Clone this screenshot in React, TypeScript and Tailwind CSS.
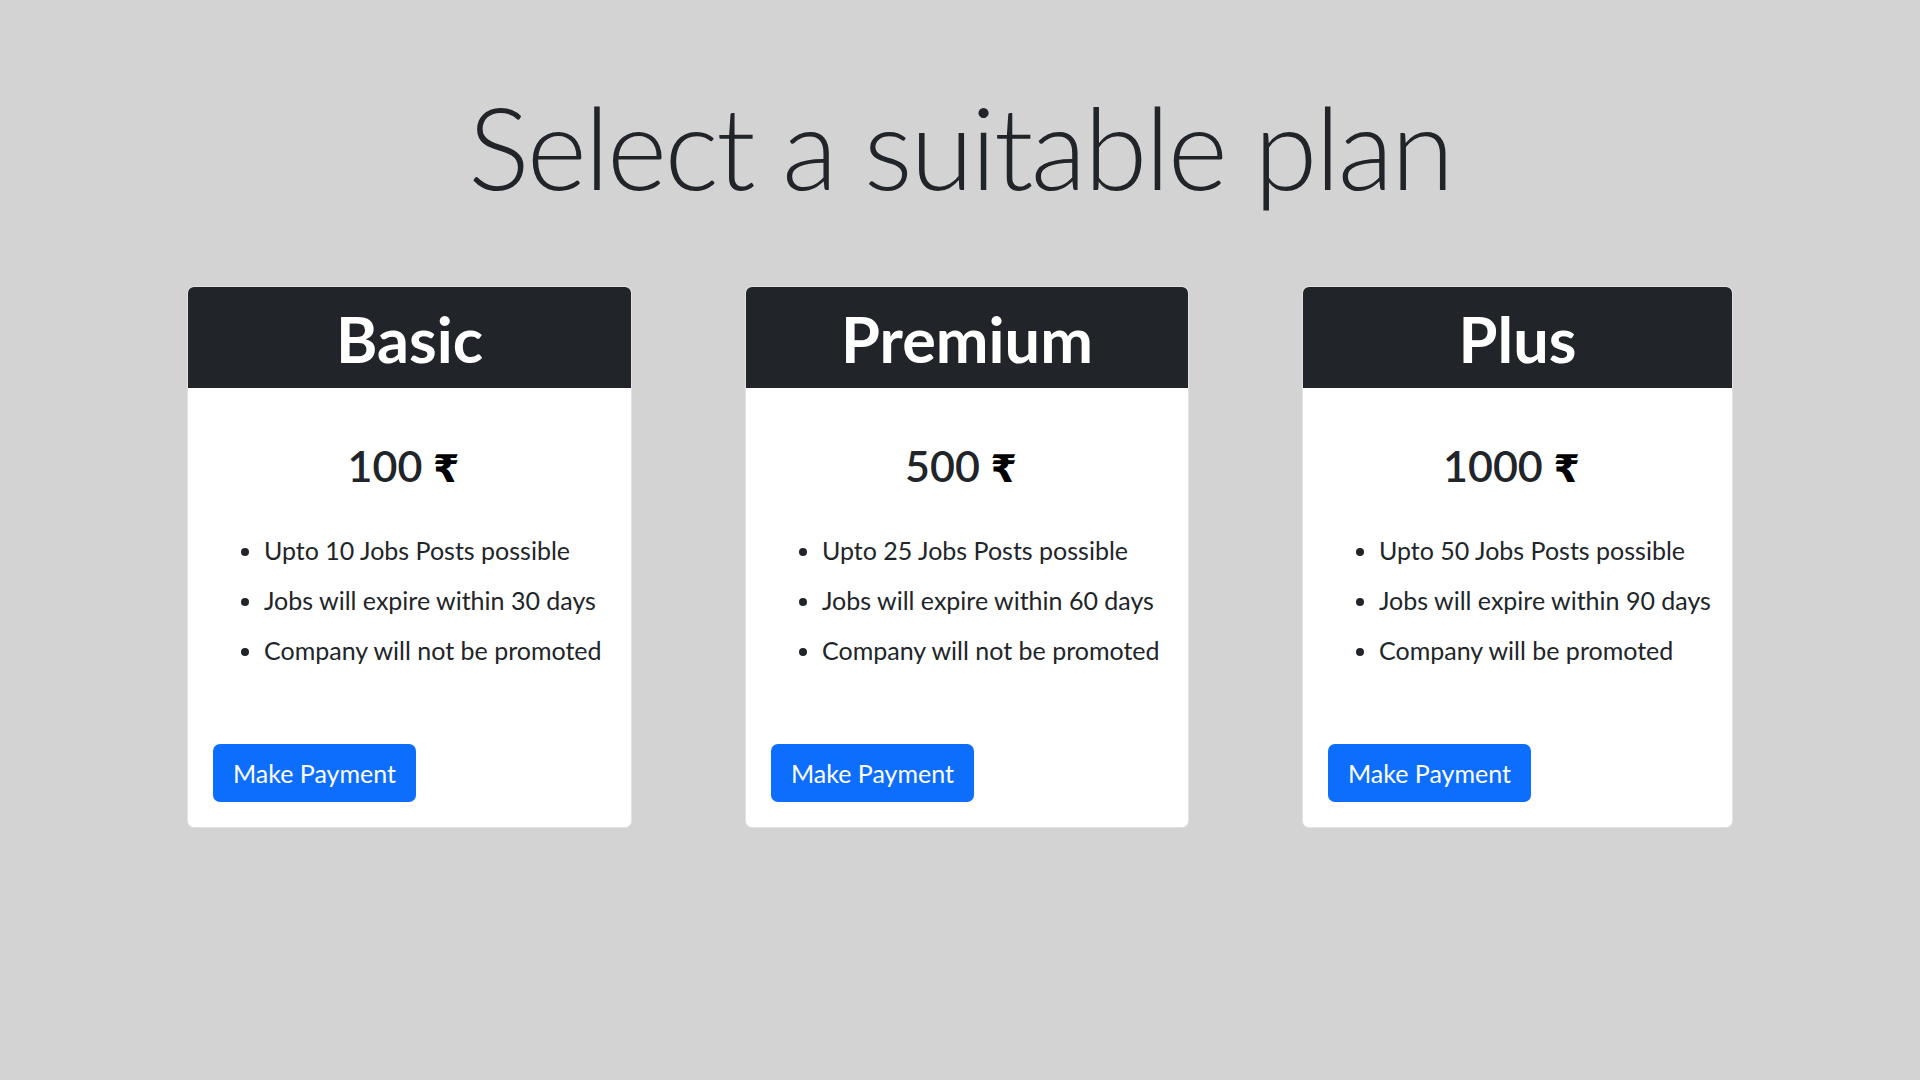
const plans = [
  {
    name: "Basic",
    price: "100",
    width: "w-[445px]",
    features: [
      "Upto 10 Jobs Posts possible",
      "Jobs will expire within 30 days",
      "Company will not be promoted",
    ],
  },
  {
    name: "Premium",
    price: "500",
    width: "w-[444px]",
    features: [
      "Upto 25 Jobs Posts possible",
      "Jobs will expire within 60 days",
      "Company will not be promoted",
    ],
  },
  {
    name: "Plus",
    price: "1000",
    width: "w-[431px]",
    features: [
      "Upto 50 Jobs Posts possible",
      "Jobs will expire within 90 days",
      "Company will be promoted",
    ],
  },
];

function PlanCard({ plan }: { plan: (typeof plans)[number] }) {
  return (
    <div
      className={`${plan.width} overflow-hidden rounded-[7px] border border-[#e2e2e2] bg-white`}
    >
      <div className="h-[101px] bg-[#212529] pt-[20px] text-center text-[63px] font-bold leading-none text-white">
        {plan.name}
      </div>
      <div className="px-[25px] pb-[25px]">
        <p className="mt-[56px] pr-[12px] text-center text-[43px] font-semibold leading-none">
          {plan.price}{" "}
          <span className="font-['DejaVu_Sans',sans-serif] text-[38px] font-bold text-black">
            ₹
          </span>
        </p>
        <ul className="mt-[37px] list-disc pl-[51px] text-[25px] leading-[50px]">
          {plan.features.map((f) => (
            <li key={f} className="whitespace-nowrap">
              {f}
            </li>
          ))}
        </ul>
        <button
          type="button"
          className="mt-[69px] h-[58px] w-[203px] rounded-[7px] bg-[#0d6efd] text-center text-[25px] leading-none text-white"
        >
          Make Payment
        </button>
      </div>
    </div>
  );
}

export default function App() {
  return (
    <main className="min-h-screen bg-[#d3d3d3] pt-[88px] font-['Lato',sans-serif] text-[#212529]">
      <h1 className="text-center text-[115px] font-light leading-none tracking-[-2.5px]">
        Select a suitable plan
      </h1>
      <div className="mt-[83px] flex items-start justify-center gap-[113px]">
        {plans.map((p) => (
          <PlanCard key={p.name} plan={p} />
        ))}
      </div>
    </main>
  );
}
